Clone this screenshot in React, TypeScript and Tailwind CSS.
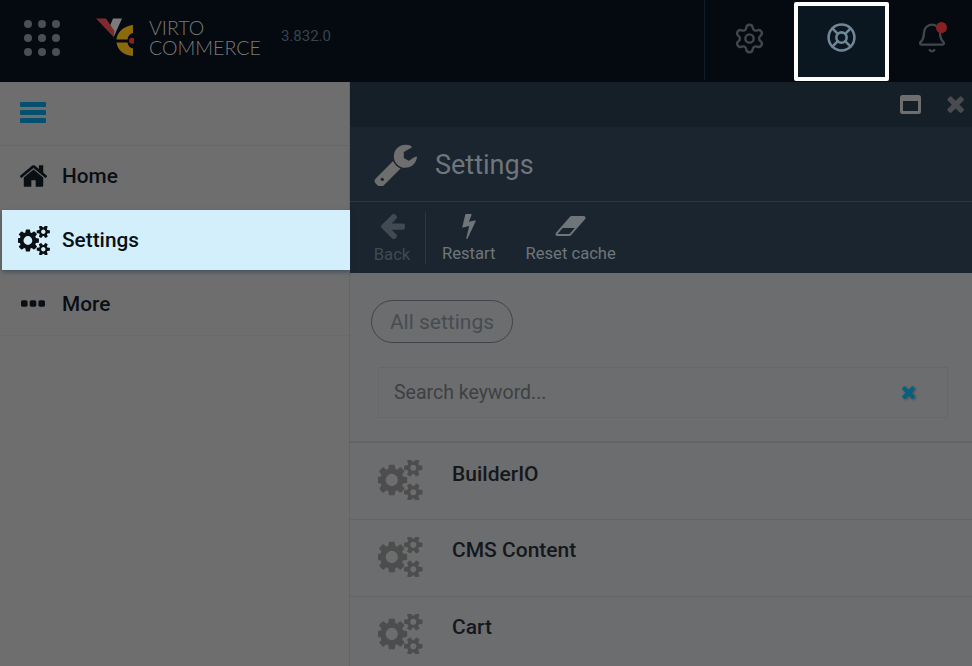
import { Bell, LifeBuoy, Settings } from 'lucide-react';

const dots = [0, 1, 2, 3, 4, 5, 6, 7, 8];

// Font Awesome 4 glyphs, the react-icons set only has the newer shapes
const glyphs = {
    home: 'M1472 992v480q0 26-19 45t-45 19h-384v-384h-256v384h-384q-26 0-45-19t-19-45v-480q0-1 .5-3t.5-3l575-474 575 474q1 2 1 6zm223-69l-62 74q-8 9-21 11h-3q-13 0-21-7l-692-577-692 577q-12 8-24 7-13-2-21-11l-62-74q-8-10-7-23.500t11-21.500l719-599q32-26 76-26t76 26l244 204v-195q0-14 9-23t23-9h192q14 0 23 9t9 23v408l219 182q10 8 11 21.500t-7 23.500z',
    cogs: 'M832 896q0-106-75-181t-181-75-181 75-75 181 75 181 181 75 181-75 75-181zm768 512q0-52-38-90t-90-38-90 38-38 90q0 53 37.500 90.500t90.500 37.500 90.500-37.500 37.500-90.500zm0-1024q0-52-38-90t-90-38-90 38-38 90q0 53 37.500 90.500t90.500 37.500 90.500-37.500 37.500-90.500zm-384 421v185q0 10-7 19.500t-16 10.500l-155 24q-11 35-32 76 34 48 90 115 7 11 7 20 0 12-7 19-23 30-82.500 89.500t-78.500 59.500q-11 0-21-7l-115-90q-37 19-77 31-11 108-23 155-7 24-30 24h-186q-11 0-20-7.500t-10-17.500l-23-153q-34-10-75-31l-118 89q-7 7-20 7-11 0-21-8-144-133-144-160 0-9 7-19 10-14 41-53t47-61q-23-44-35-82l-152-24q-10-1-17-9.500t-7-19.500v-185q0-10 7-19.500t16-10.500l155-24q11-35 32-76-34-48-90-115-7-11-7-20 0-12 7-20 22-30 82-89t79-59q11 0 21 7l115 90q34-18 77-32 11-108 23-154 7-24 30-24h186q11 0 20 7.500t10 17.500l23 153q34 10 75 31l118-89q8-7 20-7 11 0 21 8 144 133 144 160 0 8-7 19-12 16-42 54t-45 60q23 48 34 82l152 23q10 2 17 10.500t7 19.500zm640 533v140q0 16-149 31-12 27-30 52 51 113 51 138 0 4-4 7-122 71-124 71-8 0-46-47t-52-68q-20 2-30 2t-30-2q-14 21-52 68t-46 47q-2 0-124-71-4-3-4-7 0-25 51-138-18-25-30-52-149-15-149-31v-140q0-16 149-31 13-29 30-52-51-113-51-138 0-4 4-7 4-2 35-20t59-34 30-16q8 0 46 46.500t52 67.500q20-2 30-2t30 2q51-71 92-112l6-2q4 0 124 70 4 3 4 7 0 25-51 138 17 23 30 52 149 15 149 31zm0-1024v140q0 16-149 31-12 27-30 52 51 113 51 138 0 4-4 7-122 71-124 71-8 0-46-47t-52-68q-20 2-30 2t-30-2q-14 21-52 68t-46 47q-2 0-124-71-4-3-4-7 0-25 51-138-18-25-30-52-149-15-149-31v-140q0-16 149-31 13-29 30-52-51-113-51-138 0-4 4-7 4-2 35-20t59-34 30-16q8 0 46 46.500t52 67.500q20-2 30-2t30 2q51-71 92-112l6-2q4 0 124 70 4 3 4 7 0 25-51 138 17 23 30 52 149 15 149 31z',
    more: 'M576 736v192q0 40-28 68t-68 28h-192q-40 0-68-28t-28-68v-192q0-40 28-68t68-28h192q40 0 68 28t28 68zm512 0v192q0 40-28 68t-68 28h-192q-40 0-68-28t-28-68v-192q0-40 28-68t68-28h192q40 0 68 28t28 68zm512 0v192q0 40-28 68t-68 28h-192q-40 0-68-28t-28-68v-192q0-40 28-68t68-28h192q40 0 68 28t28 68z',
    wrench: 'M448 1472q0-26-19-45t-45-19-45 19-19 45 19 45 45 19 45-19 19-45zm644-420l-682 682q-37 37-90 37-52 0-91-37l-106-108q-38-36-38-90 0-53 38-91l681-681q39 98 114.500 173.500t173.500 114.500zm634-435q0 39-23 106-47 134-164.500 217.500t-258.500 83.500q-185 0-316.500-131.500t-131.500-316.500 131.500-316.500 316.500-131.500q58 0 121.500 16.500t107.500 46.500q16 11 16 28t-16 28l-293 169v224l193 107q5-3 79-48.500t135.500-81 70.500-35.500q15 0 23.500 10t8.500 25z',
    back: 'M1664 896v128q0 53-32.500 90.500t-84.500 37.500h-704l293 294q38 36 38 90t-38 90l-75 76q-37 37-90 37-52 0-91-37l-651-652q-37-37-37-90 0-52 37-91l651-650q38-38 91-38 52 0 90 38l75 74q38 38 38 91t-38 91l-293 293h704q52 0 84.500 37.500t32.500 90.500z',
    bolt: 'M1333 566q18 20 7 44l-540 1157q-13 25-42 25-4 0-14-2-17-5-25.500-19t-4.500-30l197-808-406 101q-4 1-12 1-18 0-31-11-18-15-13-39l201-825q4-14 16-23t28-9h328q19 0 32 12.500t13 29.500q0 8-5 18l-171 463 396-98q8-2 12-2 19 0 34 15z',
    eraser: 'M960 1408l336-384h-768l-336 384h768zm1013-1077q15 34 9.500 71.500t-30.500 65.500l-896 1024q-38 44-96 44h-768q-38 0-69.500-20.500t-47.500-54.500q-15-34-9.500-71.500t30.500-65.500l896-1024q38-44 96-44h768q38 0 70 20.500t47 54.500z',
    times: 'M1490 1322q0 40-28 68l-136 136q-28 28-68 28t-68-28l-294-294-294 294q-28 28-68 28t-68-28l-136-136q-28-28-28-68t28-68l294-294-294-294q-28-28-28-68t28-68l136-136q28-28 68-28t68 28l294 294 294-294q28-28 68-28t68 28l136 136q28 28 28 68t-28 68l-294 294 294 294q28 28 28 68z',
};

function Fa({ name, box, className }: { name: keyof typeof glyphs; box: string; className: string }) {
    return (
        <svg viewBox={box} className={`shrink-0 fill-current ${className}`}>
            <path d={glyphs[name]} />
        </svg>
    );
}

function Logo() {
    return (
        <svg width="38" height="40" viewBox="0 0 38 40" className="shrink-0">
            <path d="M17 .5H26L17.700 19L13.500 9Z" fill="#7b7b7b" />
            <path d="M0 .5H10L18.500 13L17.500 19Z" fill="#7f2a2c" />
            <path d="M37 7C28 8 21 14 20.500 21.500H31.500C32 18 34 15.500 37 15Z" fill="#8a6a0c" />
            <path d="M20.500 24.500H31.500C32 28 34 30 37 30.500V38C28 37.500 21.500 32 20.500 24.500Z" fill="#8a6a0c" />
            <circle cx="36" cy="22.700" r="3" fill="#8a2024" />
        </svg>
    );
}

function TopBar() {
    return (
        <header className="flex h-[82px] shrink-0 items-start bg-[#050a10]">
            <div className="flex h-[76px] w-[704px] shrink-0 items-center">
                <div className="ml-6 grid w-[36px] grid-cols-3 gap-[6px]">
                    {dots.map((d) => (
                        <span key={d} className="h-2 w-2 rounded-full bg-[#4b4e53]" />
                    ))}
                </div>
                <div className="ml-[36px]">
                    <Logo />
                </div>
                <div className="ml-[15px] font-['Lato',sans-serif] text-[19.6px] leading-[20px] font-light text-[#7a7a7a]">
                    <div>VIRTO</div>
                    <div>COMMERCE</div>
                </div>
                <span className="mb-1 ml-5 text-[15px] text-[#36444f]">3.832.0</span>
            </div>
            <div className="flex h-[80px] flex-1 items-start border-l border-[#111c26]">
                <div className="flex h-[76px] w-[89px] items-center justify-center">
                    <Settings className="h-[33px] w-[33px] text-[#3f474d]" strokeWidth={1.75} />
                </div>
                <div className="mt-[2px] flex h-[79px] w-[95px] items-center justify-center rounded-[2px] border-4 border-white bg-[#0a1620] pb-[8px]">
                    <LifeBuoy className="h-[31px] w-[31px] text-[#6f8796]" strokeWidth={2} />
                </div>
                <div className="relative flex h-[76px] w-[86px] items-center justify-center">
                    <Bell className="h-[32px] w-[32px] text-[#3f474d]" strokeWidth={1.75} />
                    <span className="absolute top-[22px] left-[47px] h-[11px] w-[11px] rounded-full bg-[#8a2024]" />
                </div>
            </div>
        </header>
    );
}

function Sidebar() {
    return (
        <aside className="w-[350px] shrink-0 border-r border-[#646464] bg-[#6e6e6e] text-[20.8px] font-medium text-[#0a0f14]">
            <div className="flex h-[64px] flex-col justify-center gap-[3px] border-b border-[#676767] pb-[3px] pl-5">
                <span className="h-[5px] w-[26px] rounded-[1px] bg-[#05506e]" />
                <span className="h-[5px] w-[26px] rounded-[1px] bg-[#05506e]" />
                <span className="h-[5px] w-[26px] rounded-[1px] bg-[#05506e]" />
            </div>
            <div className="flex h-[64px] items-center pb-1 pl-5">
                <Fa name="home" box="97 256 1598 1280" className="h-[22px] w-[27px]" />
                <span className="relative top-px ml-[15px]">Home</span>
            </div>
            <div className="relative z-10 ml-[2px] -mr-px flex h-[60px] items-center bg-[#d2effb] pl-4 shadow-[0_2px_4px_rgba(30,50,70,0.5)]">
                <Fa name="cogs" box="0 64 1920 1664" className="h-[29px] w-[33px]" />
                <span className="relative top-px ml-[11px]">Settings</span>
            </div>
            <div className="mt-[4px] flex h-[62px] items-center border-b border-[#6a6a6a] pb-[2px] pl-[21px]">
                <Fa name="more" box="192 640 1408 384" className="h-[7px] w-[24px]" />
                <span className="relative top-px ml-[17px]">More</span>
            </div>
        </aside>
    );
}

function ToolButton({ icon, label, dim }: { icon: React.ReactNode; label: string; dim?: boolean }) {
    return (
        <div className={`flex flex-col items-center text-[16.6px] leading-[20px] ${dim ? 'text-[#414a52]' : 'text-[#6f7679]'}`}>
            <div className="flex h-[33px] items-center pb-[3px]">{icon}</div>
            <span>{label}</span>
        </div>
    );
}

function SettingRow({ name }: { name: string }) {
    return (
        <div className="flex h-[77px] items-start border-b border-[#636465] pt-[17px] pl-[28px]">
            <Fa name="cogs" box="0 64 1920 1664" className="h-[40px] w-[46px] text-[#4d4d4d]" />
            <span className="ml-[28px] text-[21px] leading-[26px] font-medium text-[#14181c] [div:first-child>&]:mt-px">{name}</span>
        </div>
    );
}

function Blade() {
    return (
        <main className="flex-1 overflow-hidden bg-[#6c6d6f]">
            <div className="flex h-[45px] items-center justify-end gap-[26px] bg-[#141f27] pr-[8px]">
                <svg width="21" height="19" viewBox="0 0 21 19">
                    <rect x="1.500" y="1.500" width="18" height="16" rx="1" fill="#141f27" stroke="#6e6e6e" strokeWidth="3" />
                    <rect x="1" y="1" width="19" height="5" fill="#6e6e6e" />
                </svg>
                <Fa name="times" box="282 342 1208 1212" className="h-[17px] w-[17px] text-[#484c50]" />
            </div>
            <div className="flex h-[75px] items-center border-b border-[#2b3743] bg-[#1a2530] pl-[24px]">
                <Fa name="wrench" box="64 64 1664 1664" className="h-[43px] w-[43px] text-[#6e6e6e]" />
                <h1 className="ml-[18px] pt-[3px] text-[27px] text-[#6f7679]">Settings</h1>
            </div>
            <div className="flex h-[71px] items-center bg-[#1a2530]">
                <div className="h-[52px] w-[76px] border-r border-[#2b3743] pl-[9px]">
                    <ToolButton dim label="Back" icon={<Fa name="back" box="128 192 1536 1536" className="h-[25px] w-[25px]" />} />
                </div>
                <div className="ml-[16px]">
                    <ToolButton label="Restart" icon={<Fa name="bolt" box="383 128 958 1664" className="h-[25px] w-[15px]" />} />
                </div>
                <div className="ml-[30px]">
                    <ToolButton label="Reset cache" icon={<Fa name="eraser" box="32 256 1984 1280" className="h-[20px] w-[31px]" />} />
                </div>
            </div>
            <div className="pt-[27px] pl-[21px]">
                <div className="flex h-[43px] w-[142px] items-center justify-center rounded-full border border-[#3f444b] pt-[2px] text-[21px] text-[#474c52]">
                    All settings
                </div>
            </div>
            <div className="mt-[24px] mr-[24px] ml-[28px] flex h-[51px] items-center justify-between border border-[#666768] pr-[32px] pl-[15px]">
                <span className="text-[19.500px] text-[#3f4042]">Search keyword...</span>
                <Fa name="times" box="282 342 1208 1212" className="h-[13px] w-[13px] text-[#05607f] drop-shadow-[1px_1px_1px_rgba(0,0,0,0.3)]" />
            </div>
            <div className="mt-[23px] border-t-2 border-[#636465]">
                <SettingRow name="BuilderIO" />
                <SettingRow name="CMS Content" />
                <SettingRow name="Cart" />
            </div>
        </main>
    );
}

export default function App() {
    return (
        <div className="flex h-[666px] w-[972px] flex-col overflow-hidden font-['Roboto',sans-serif]">
            <TopBar />
            <div className="flex min-h-0 flex-1">
                <Sidebar />
                <Blade />
            </div>
        </div>
    );
}
